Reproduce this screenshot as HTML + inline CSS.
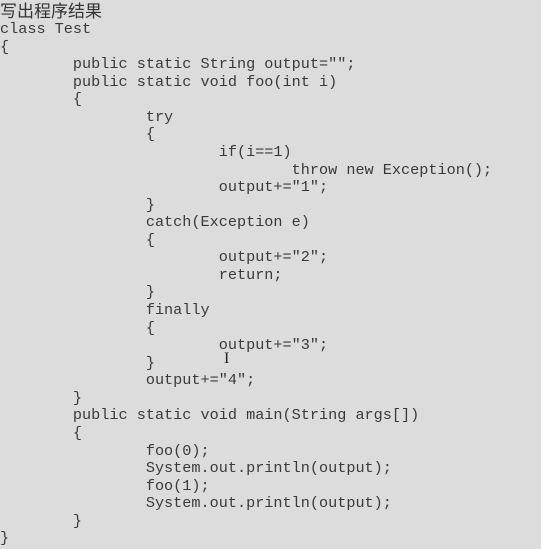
<!DOCTYPE html>
<html><head><meta charset="utf-8"><style>
html,body{margin:0;padding:0;background:#dcdcdc;width:541px;height:549px;overflow:hidden}
.t{position:absolute;left:0;top:0;font:17px "Noto Sans CJK SC",sans-serif;color:#333;line-height:20px}
pre{position:absolute;left:0;top:21px;margin:0;font-family:"Liberation Mono",monospace;font-size:15.2px;line-height:17.57px;color:#3a3a3a}
.c{position:absolute;left:224px;top:350px;font:16px "Liberation Serif",serif;color:#222}
</style></head><body>
<div class="t">写出程序结果</div>
<pre>class Test
{
        public static String output="";
        public static void foo(int i)
        {
                try
                {
                        if(i==1)
                                throw new Exception();
                        output+="1";
                }
                catch(Exception e)
                {
                        output+="2";
                        return;
                }
                finally
                {
                        output+="3";
                }
                output+="4";
        }
        public static void main(String args[])
        {
                foo(0);
                System.out.println(output);
                foo(1);
                System.out.println(output);
        }
}</pre>
<div class="c">I</div>
</body></html>
